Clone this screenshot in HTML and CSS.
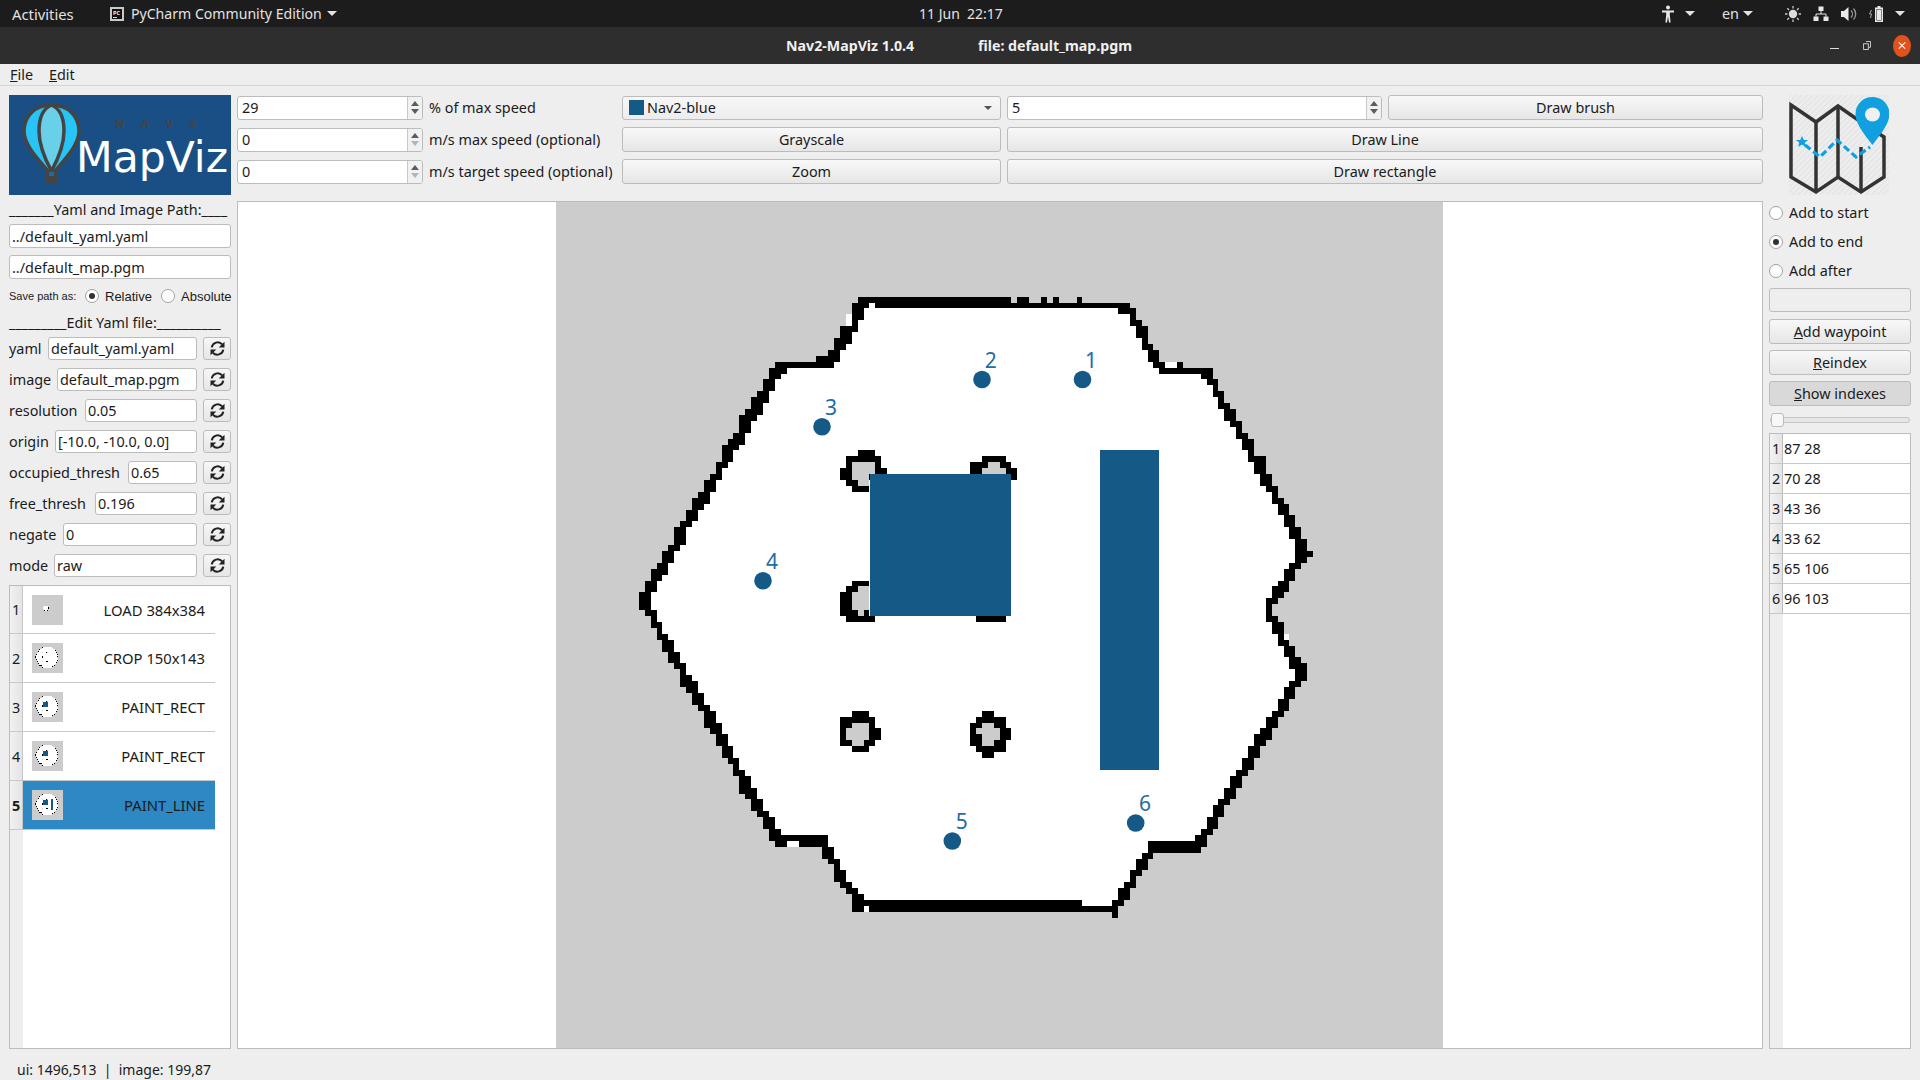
FILE: index.html
```html
<!DOCTYPE html>
<html lang="en">
<head>
<meta charset="utf-8">
<title>Nav2-MapViz</title>
<link rel="stylesheet" href="styles.css">
</head>
<body>
<svg class="defs" width="0" height="0">
  <symbol id="refresh" viewBox="0 0 16 16">
    <path class="ri" d="M2.6 7A5.6 5.6 0 0 1 12.4 4.2"/>
    <path class="ri" d="M13.4 9A5.6 5.6 0 0 1 3.6 11.8"/>
    <path class="rf" d="M14.6 1.6V7H9.2z"/>
    <path class="rf" d="M1.4 14.4V9H6.8z"/>
  </symbol>
</svg>
<div class="app">
  <header class="topbar">
    <div class="tb-left">
      <span class="tb-activities">Activities</span>
      <span class="tb-app">
        <svg class="pc" viewBox="0 0 14 14"><rect width="14" height="14" fill="#c9c9c9"/><rect x="2" y="2" width="10" height="10" fill="#111"/><text x="3" y="7.5" class="pc-t">PC</text><rect x="3" y="10" width="4" height="1" fill="#ddd"/></svg>
        PyCharm Community Edition<i class="caret"></i>
      </span>
    </div>
    <div class="tb-clock">11 Jun&nbsp;&nbsp;22:17</div>
    <div class="tb-right">
      <svg class="ti ti-a" viewBox="0 0 14 18"><circle cx="7" cy="2.4" r="2" fill="#e8e8e8"/><path d="M1 5.6h12v1.8H8.8V10l.8 7.5H8L7 11.5 6 17.5H4.4L5.2 10V7.4H1z" fill="#e8e8e8"/></svg>
      <i class="caret c-a"></i>
      <span class="tb-en">en</span><i class="caret c-en"></i>
      <svg class="ti ti-sun" viewBox="0 0 18 18"><circle cx="9" cy="9" r="4.2" fill="#ddd"/><path d="M9 1v2.4M9 14.6V17M1 9h2.4M14.6 9H17M3.3 3.3l1.7 1.7M13 13l1.7 1.7M14.7 3.3L13 5M5 13l-1.7 1.7" stroke="#ccc" stroke-width="1.3"/></svg>
      <svg class="ti ti-net" viewBox="0 0 16 16"><path d="M5.5 0.5h5v4.5h-5zM0.5 10.5h5V15h-5zM10.5 10.5h5V15h-5z" fill="#e8e8e8"/><path d="M8 5v3M3 10.5V8h10v2.5" stroke="#e8e8e8" fill="none"/></svg>
      <svg class="ti ti-vol" viewBox="0 0 18 16"><path d="M1 5h3l4.5-4v14L4 11H1z" fill="#e8e8e8"/><path d="M11 4.5a5 5 0 0 1 0 7M13.5 2.5a8 8 0 0 1 0 11" stroke="#999" stroke-width="1.3" fill="none"/></svg>
      <svg class="ti ti-bat" viewBox="0 0 16 18"><path d="M2.5 5L0.5 9h2L1.5 13" stroke="#aaa" fill="none"/><path d="M8.5 1h3v1.5h2.5V17H6V2.5h2.500z" fill="#e8e8e8"/><rect x="7.500" y="4" width="5" height="11.500" fill="#1c1c1c"/><rect x="8" y="4.500" width="4" height="10.500" fill="#e8e8e8"/></svg>
      <i class="caret c-end"></i>
    </div>
  </header>

  <div class="titlebar">
    <div class="tt-center">
      <span class="tt-name">Nav2-MapViz 1.0.4</span>
      <span class="tt-file">file: default_map.pgm</span>
    </div>
    <div class="tt-ctl">
      <i class="w-min"></i>
      <svg class="w-max" viewBox="0 0 9 10"><path d="M3.500 0.500h5v6.500h-2M0.500 3h5.500v6.500H0.500z" fill="none" stroke="#ddd"/></svg>
      <span class="w-close"><svg viewBox="0 0 10 10"><path d="M1 1l8 8M9 1l-8 8" stroke="#fff" stroke-width="1.300"/></svg></span>
    </div>
  </div>

  <nav class="menubar"><span class="m-file"><u>F</u>ile</span><span class="m-edit"><u>E</u>dit</span></nav>

  <main class="main">
    <aside class="left">
      <div class="logo">
        <svg class="balloon" viewBox="0 0 222 100">
          <path d="M42.500 10C26 10 15 21 15 36c0 14 14 28 24 40h7c10-12 24-26 24-40C70 21 59 10 42.500 10z" fill="#29c4f6" stroke="#444" stroke-width="3.500"/>
          <path d="M42.500 10C33 14 30 25 30 36c0 14 7 30 12.500 40C48 66 55 50 55 36 55 25 52 14 42.500 10z" fill="#68d0e8" stroke="#444" stroke-width="3.500"/>
          <rect x="37" y="75" width="11" height="13" fill="#444"/>
          <rect x="40" y="77" width="5" height="4" fill="#1f6aa0"/>
        </svg>
        <span class="logo-nav">N A V 2</span>
        <span class="logo-name">MapViz</span>
      </div>
      <div class="head head-a">_______Yaml and Image Path:____</div>
      <input class="field full" value="../default_yaml.yaml">
      <input class="field full second" value="../default_map.pgm">
      <div class="savepath">
        <span class="sp-label">Save path as:</span>
        <span class="radio on"></span><span class="sp-opt sp-rel">Relative</span>
        <span class="radio"></span><span class="sp-opt">Absolute</span>
      </div>
      <div class="head head-b">_________Edit Yaml file:__________</div>
      <div class="yrow"><label class="yl yl-yaml">yaml</label><input class="field" value="default_yaml.yaml"><button class="rbtn"><svg class="ri-svg"><use href="#refresh"/></svg></button></div>
      <div class="yrow"><label class="yl yl-image">image</label><input class="field" value="default_map.pgm"><button class="rbtn"><svg class="ri-svg"><use href="#refresh"/></svg></button></div>
      <div class="yrow"><label class="yl yl-res">resolution</label><input class="field" value="0.05"><button class="rbtn"><svg class="ri-svg"><use href="#refresh"/></svg></button></div>
      <div class="yrow"><label class="yl yl-origin">origin</label><input class="field" value="[-10.0, -10.0, 0.0]"><button class="rbtn"><svg class="ri-svg"><use href="#refresh"/></svg></button></div>
      <div class="yrow"><label class="yl yl-occ">occupied_thresh</label><input class="field" value="0.65"><button class="rbtn"><svg class="ri-svg"><use href="#refresh"/></svg></button></div>
      <div class="yrow"><label class="yl yl-free">free_thresh</label><input class="field" value="0.196"><button class="rbtn"><svg class="ri-svg"><use href="#refresh"/></svg></button></div>
      <div class="yrow"><label class="yl yl-neg">negate</label><input class="field" value="0"><button class="rbtn"><svg class="ri-svg"><use href="#refresh"/></svg></button></div>
      <div class="yrow"><label class="yl yl-mode">mode</label><input class="field" value="raw"><button class="rbtn"><svg class="ri-svg"><use href="#refresh"/></svg></button></div>
      <div class="table history">
        <div class="hrow"><span class="rh">1</span><span class="hcell"><svg class="thumb" viewBox="-1090 -1110 3400 3400"><use href="#map-base"/></svg><span class="htext">LOAD 384x384</span></span></div>
        <div class="hrow"><span class="rh">2</span><span class="hcell"><svg class="thumb" viewBox="0 0 887 846"><use href="#map-base"/></svg><span class="htext">CROP 150x143</span></span></div>
        <div class="hrow"><span class="rh">3</span><span class="hcell"><svg class="thumb" viewBox="0 0 887 846"><use href="#map-base"/><use href="#paint-rect"/></svg><span class="htext">PAINT_RECT</span></span></div>
        <div class="hrow"><span class="rh">4</span><span class="hcell"><svg class="thumb" viewBox="0 0 887 846"><use href="#map-base"/><use href="#paint-rect"/></svg><span class="htext">PAINT_RECT</span></span></div>
        <div class="hrow sel"><span class="rh">5</span><span class="hcell"><svg class="thumb" viewBox="0 0 887 846"><use href="#map-base"/><use href="#paint-rect"/><use href="#paint-line"/></svg><span class="htext">PAINT_LINE</span></span></div>
      </div>
    </aside>

    <section class="center">
      <div class="controls">
        <div class="spin"><span class="sv">29</span><span class="sb"><i class="up"></i><i class="dn"></i></span></div>
        <div class="clabel">% of max speed</div>
        <div class="combo"><i class="swatch"></i><span>Nav2-blue</span><i class="cb-arrow"></i></div>
        <div class="spin"><span class="sv">5</span><span class="sb"><i class="up"></i><i class="dn"></i></span></div>
        <button class="btn">Draw brush</button>

        <div class="spin"><span class="sv">0</span><span class="sb"><i class="up"></i><i class="dn off"></i></span></div>
        <div class="clabel">m/s max speed (optional)</div>
        <button class="btn">Grayscale</button>
        <button class="btn wide">Draw Line</button>

        <div class="spin"><span class="sv">0</span><span class="sb"><i class="up"></i><i class="dn off"></i></span></div>
        <div class="clabel">m/s target speed (optional)</div>
        <button class="btn">Zoom</button>
        <button class="btn wide">Draw rectangle</button>
      </div>
      <div class="canvas">
        <svg class="map" viewBox="0 0 887 846">
          <g id="map-base" transform="scale(5.915)">
            <path class="wall" d="M51 16H77v1H51zM78 16h2v1h-2zM82 16h1v1h-1zM84 16h1v1h-1zM88 16h1v1h-1zM94 120h1v1h-1z"/>
            <path class="wall" d="M50 17H97V18H98V20H99V21H100V24H101V25H102V27H106V28H111V30H112V32H113V34H114V35H115V37H116V39H117V40H118V43H120V46H121V48H122V50H123V51H124V53H125V55H126V57H127V59H128V60H127V61H126V62H125V64H124V66H123V67H122V68H121V70H122V71H123V73H124V75H125V77H126V78H127V81H126V82H125V84H124V86H123V87H122V89H121V91H120V92H119V94H118V96H117V97H116V99H115V101H114V102H113V104H112V106H111V107H110V109H109V110H101V111H100V113H99V114H98V116H97V118H96V119H95V120H50V118V117H49V116H48V115H47V112H46V111H45V109H37V108H36V106H35V104H34V103H33V101H32V100H31V97H30V95H29V94H28V92H27V90H26V89H25V86H24V85H23V83H22V82H21V79H20V78H19V76H18V74H17V72H16V70H15V69H14V66H15V64H16V62H17V61H18V59H19V58H20V55H21V54H22V52H23V50H24V49H25V47H26V46H27V44H28V41H29V40H30V39H31V36H32V35H33V33H34V32H35V30H36V28H37V27H44V26H46V25H47V23H48V21H49V19H50Z"/>
            <path class="free" d="M52 18H95V19H97V21H98V23H99V25H100V27H101V28H102V29H109V30H110V31H111V33H112V35H113V37H114V38H115V40H116V42H117V44H118V46H119V48H120V49H121V51H122V53H123V55H124V57H125V61H124V62H123V64H122V65H121V67H120V71H121V73H122V75H123V77H124V79H125V81H124V82H123V84H122V86H121V87H120V89H119V90H118V92H117V94H116V96H115V97H114V99H113V101H112V102H111V104H110V106H109V107H108V108H100V110H99V111H98V113H97V115H96V116H95V118H52V117H51V116H50V115H49V113H48V111H47V109H46V107H38V106H37V104H36V103H35V101H34V99H33V97H32V96H31V94H30V92H29V90H28V88H27V86H26V85H25V83H24V81H23V80H22V78H21V76H20V74H19V73H18V71H17V69H16V66H17V64H18V63H19V61H20V59H21V58H22V55H23V54H24V52H25V51H26V49H27V47H28V45H29V44H30V42H31V41H32V39H33V37H34V36H35V34H36V32H37V30H38V29H39V28H47V27H48V25H49V24H50V22H51V20H52Z"/>
            <path class="free" d="M53 17h1v1h-1zM49 19h1v2h-1zM103 27h2v1h-2zM123 73h1v1h-1zM39 108h2v1h-2zM52 119h1v1h-1zM89 118h5v1h-5z"/>
            <path class="wall" d="M51 42H54V43H55V45H56V47H53V49H50V48H49V47H48V45H49V43H51Z"/>
            <path class="gray" d="M50 44H54V46H53V48H51V47H50Z"/>
            <path class="wall" d="M72 43H76V44H77V45H78V47H70V44H72Z"/>
            <path class="gray" d="M73 44H75V45H76V46H72V45H73Z"/>
            <path class="wall" d="M50 64H53V70H54V71H49V70H48V66H49V65H50Z"/>
            <path class="gray" d="M51 65H53V69H52V70H51V69H50V66H51Z"/>
            <path class="wall" d="M71 70h5v1h-5z"/>
            <path class="wall" d="M50 86H53V87H54V89H55V91H54V92H53V93H50V92H48V87H50Z"/>
            <path class="gray" d="M50 88H53V91H52V92H50V91H49V89H50Z"/>
            <path class="wall" d="M72 86H74V87H76V89H77V91H76V93H74V94H72V93H71V92H70V88H71V87H72Z"/>
            <path class="gray" d="M72 88H74V89H75V91H74V92H72V90H71V89H72Z"/>
          </g>
          <rect id="paint-rect" class="paint" x="53.100" y="46" width="23.900" height="24" transform="scale(5.915)"/>
          <rect id="paint-line" class="paint" x="92" y="42" width="10" height="54" transform="scale(5.915)"/>
          <g class="wps">
            <circle cx="526.500" cy="177.500" r="8.800"/>
            <circle cx="426" cy="177.500" r="8.800"/>
            <circle cx="266" cy="224.700" r="8.800"/>
            <circle cx="207" cy="378.700" r="8.800"/>
            <circle cx="396.300" cy="639" r="8.800"/>
            <circle cx="579.700" cy="621" r="8.800"/>
          </g>
          <g class="wp-text">
            <text x="535" y="166">1</text>
            <text x="434.700" y="166">2</text>
            <text x="275" y="213">3</text>
            <text x="216" y="366.700">4</text>
            <text x="405.700" y="627">5</text>
            <text x="589" y="609.300">6</text>
          </g>
        </svg>
      </div>
    </section>

    <aside class="right">
      <svg class="maplogo" viewBox="0 0 100 100">
        <defs>
          <pattern id="hatch" width="4" height="4" patternUnits="userSpaceOnUse" patternTransform="rotate(45)"><rect width="2" height="4" fill="#e6e6e6"/></pattern>
        </defs>
        <rect width="100" height="100" fill="url(#hatch)"/>
        <path d="M2 10L27 27 49 11 72 27 95 42V82L72 97 49 82 27 97 2 82Z" fill="none" stroke="#333" stroke-width="3.500" stroke-linejoin="miter"/>
        <path d="M27 27V97M49 11V82M72 52V97" stroke="#333" stroke-width="3.500"/>
        <path d="M16 50L31 62 48 45 67 62 81 52" fill="none" stroke="#109fdf" stroke-width="3.200" stroke-dasharray="7 3.500"/>
        <path d="M13 41l1.800 4h4.200l-3.300 2.800 1.200 4.200-3.900-2.400-3.900 2.400 1.200-4.200L7 45h4.200z" fill="#109fdf"/>
        <path d="M83.500 2C74 2 66.500 9.500 66.500 19c0 11 12 24 17 31 5-7 17-20 17-31C100.500 9.500 93 2 83.500 2z" fill="#109fdf"/>
        <ellipse cx="83.500" cy="19.500" rx="7.500" ry="7" fill="#f0f0f0"/>
      </svg>
      <div class="ropt first"><span class="radio"></span><span>Add to start</span></div>
      <div class="ropt"><span class="radio on"></span><span>Add to end</span></div>
      <div class="ropt"><span class="radio"></span><span>Add after</span></div>
      <input class="field full idx">
      <button class="btn rb"><u>A</u>dd waypoint</button>
      <button class="btn rb"><u>R</u>eindex</button>
      <button class="btn rb pressed"><u>S</u>how indexes</button>
      <div class="slider"><i class="handle"></i></div>
      <div class="table points">
        <div class="prow"><span class="rh">1</span><span class="pcell">87 28</span></div>
        <div class="prow"><span class="rh">2</span><span class="pcell">70 28</span></div>
        <div class="prow"><span class="rh">3</span><span class="pcell">43 36</span></div>
        <div class="prow"><span class="rh">4</span><span class="pcell">33 62</span></div>
        <div class="prow"><span class="rh">5</span><span class="pcell">65 106</span></div>
        <div class="prow"><span class="rh">6</span><span class="pcell">96 103</span></div>
      </div>
    </aside>
  </main>
  <footer class="status">ui: 1496,513&nbsp;&nbsp;|&nbsp;&nbsp;image: 199,87</footer>
</div>
</body>
</html>
```
FILE: styles.css
```css
* { box-sizing: border-box; }
html, body { margin: 0; padding: 0; }
body { font-family: "Noto Sans", "Open Sans", sans-serif; font-size: 14.4px; color: #1b1b1b; background: #eeeeee; overflow: hidden; }
.defs { display: block; height: 0; }
.ri { fill: none; stroke: #222; stroke-width: 1.9; }
.rf { fill: #222; }
.app { width: 1920px; height: 1080px; display: flex; flex-direction: column; }

.topbar { height: 27px; background: #1c1c1c; color: #e2e2e2; display: flex; align-items: center; position: relative; flex: none; font-size: 14.4px; }
.tb-left { display: flex; align-items: center; padding-left: 12px; }
.tb-activities { width: 98px; font-size: 14.8px; }
.tb-app { display: flex; align-items: center; font-size: 14.1px; }
.pc { width: 14px; height: 14px; margin-right: 7px; }
.pc-t { font-size: 5.5px; font-weight: 700; fill: #eee; }
.caret { display: inline-block; width: 0; height: 0; border-left: 5px solid transparent; border-right: 5px solid transparent; border-top: 5px solid #e2e2e2; margin-left: 5px; }
.tb-clock { position: absolute; left: 919px; top: 0; line-height: 27px; white-space: nowrap; font-size: 14px; }
.tb-right { margin-left: auto; display: flex; align-items: center; padding-right: 15px; }
.ti { display: block; flex: none; }
.ti-a { width: 14px; height: 18px; margin-right: 0; }
.c-a { margin-left: 10px; }
.tb-en { margin-left: 27px; }
.c-en { margin-left: 4px; }
.ti-sun { width: 18px; height: 18px; margin-left: 31px; }
.ti-net { width: 16px; height: 16px; margin-left: 11px; }
.ti-vol { width: 18px; height: 16px; margin-left: 11px; }
.ti-bat { width: 16px; height: 18px; margin-left: 11px; }
.c-end { margin-left: 10px; }

.titlebar { height: 37px; background: #2e2e2e; color: #f0f0f0; display: flex; align-items: center; flex: none; position: relative; font-weight: 700; font-size: 14.2px; }
.tt-center { display: flex; padding-left: 786px; }
.tt-name { width: 192px; }
.tt-ctl { margin-left: auto; display: flex; align-items: center; padding-right: 9px; }
.w-min { display: block; width: 9px; height: 1.5px; background: #ddd; margin-top: 6px; margin-right: 24px; }
.w-max { display: block; width: 8px; height: 9px; margin-right: 22px; }
.w-close { width: 18px; height: 22px; border-radius: 50%; background: #e2521d; display: flex; align-items: center; justify-content: center; }
.w-close svg { width: 8px; height: 9px; display: block; }

.menubar { height: 22px; flex: none; background: #eeeeee; border-bottom: 1px solid #d6d6d6; display: flex; align-items: center; padding-left: 10px; }
.m-file { width: 39px; }

.main { flex: 1; min-height: 0; display: flex; padding: 9px 9px 0; gap: 6px; }
.left { width: 222px; flex: none; display: flex; flex-direction: column; }
.center { flex: 1; min-width: 0; display: flex; flex-direction: column; }
.right { width: 142px; flex: none; display: flex; flex-direction: column; }

.logo { height: 100px; flex: none; background: #1a4f85; position: relative; overflow: hidden; }
.balloon { width: 222px; height: 100px; display: block; }
.logo-nav { position: absolute; left: 106px; top: 20px; color: #444; font-weight: 700; font-size: 12px; letter-spacing: 5px; white-space: nowrap; font-family: "Noto Sans", sans-serif; word-spacing: 3px; }
.logo-name { position: absolute; left: 67px; top: 34px; color: #fff; font-family: "DejaVu Sans", sans-serif; font-size: 42.5px; line-height: 58px; white-space: nowrap; }

.head { white-space: nowrap; text-align: left; line-height: 20px; flex: none; }
.head-a { margin-top: 5px; margin-bottom: 4px; }
.head-b { margin-top: 6px; margin-bottom: 4px; }
.field { height: 24px; border: 1px solid #bcbcbc; border-radius: 3px; background: #fff; padding: 0 2px; font: inherit; color: #1b1b1b; min-width: 0; flex: 1; outline: none; }
.full { width: 100%; flex: none; }
.second { margin-top: 7px; }
.savepath { display: flex; align-items: center; height: 22px; margin-top: 6px; font-family: "Liberation Sans", sans-serif; flex: none; }
.sp-label { font-size: 11px; width: 67px; flex: none; white-space: nowrap; }
.sp-opt { font-size: 13px; flex: none; }
.sp-rel { width: 47px; }
.savepath .radio { margin-left: 9px; margin-right: 6px; }
.radio { display: inline-flex; width: 14px; height: 14px; border: 1px solid #a2a2a2; border-radius: 50%; background: #fff; align-items: center; justify-content: center; flex: none; }
.radio.on::after { content: ""; width: 6px; height: 6px; border-radius: 50%; background: #333; }

.yrow { height: 23px; display: flex; align-items: stretch; flex: none; margin-bottom: 8px; }
.yrow .field { height: auto; }
.yl { display: flex; align-items: center; white-space: nowrap; flex: none; }
.yl-yaml { width: 39px; }
.yl-image { width: 48px; }
.yl-res { width: 76px; }
.yl-origin { width: 46px; }
.yl-occ { width: 119px; }
.yl-free { width: 86px; }
.yl-neg { width: 54px; }
.yl-mode { width: 45px; }
.rbtn { width: 28px; margin-left: 6px; padding: 0; flex: none; border: 1px solid #bcbcbc; border-radius: 3px; background: linear-gradient(#f7f7f7, #e6e6e6); display: flex; align-items: center; justify-content: center; }
.ri-svg { width: 17px; height: 17px; display: block; }

.table { flex: 1; min-height: 0; border: 1px solid #bcbcbc; background: linear-gradient(to right, #eeeeee 13px, #ffffff 13px); }
.rh { width: 13px; flex: none; display: flex; align-items: center; justify-content: center; border-right: 1px solid #bcbcbc; background: linear-gradient(to right, #f2f2f2, #e4e4e4); }
.hrow { width: 205px; height: 49px; display: flex; border-bottom: 1px solid #c8c8c8; }
.hrow:first-child { height: 48px; }
.hrow .rh { border-right-color: #c8c8c8; }
.hcell { flex: 1; display: flex; align-items: center; padding-left: 9px; padding-right: 10px; background: #fff; }
.thumb { width: 31px; height: 30px; background: #cccccc; display: block; flex: none; shape-rendering: crispEdges; }
.htext { margin-left: auto; white-space: nowrap; font-size: 14.8px; }
.sel .hcell { background: #2d88c3; }
.sel .rh { font-weight: 700; }

.controls { display: grid; grid-template-columns: 186px 187px 379px 375px 375px; grid-template-rows: 25px 25px 25px; gap: 7px 6px; flex: none; }
.spin { height: 24px; align-self: center; border: 1px solid #bcbcbc; border-radius: 3px; background: #fff; display: flex; align-items: center; }
.sv { flex: 1; padding-left: 4px; }
.sb { width: 15px; height: 100%; border-left: 1px solid #c8c8c8; background: #f1f1f1; display: flex; flex-direction: column; align-items: center; justify-content: center; gap: 3px; border-radius: 0 2px 2px 0; }
.up { width: 0; height: 0; border-left: 4px solid transparent; border-right: 4px solid transparent; border-bottom: 5px solid #5c5c5c; }
.dn { width: 0; height: 0; border-left: 4px solid transparent; border-right: 4px solid transparent; border-top: 5px solid #5c5c5c; }
.dn.off { border-top-color: #b4b4b4; }
.clabel { display: flex; align-items: center; white-space: nowrap; }
.combo { height: 24px; align-self: center; border: 1px solid #bcbcbc; border-radius: 3px; background: linear-gradient(#f7f7f7, #ececec); display: flex; align-items: center; padding-left: 6px; }
.swatch { width: 15px; height: 15px; background: #155a87; margin-right: 3px; }
.cb-arrow { margin-left: auto; margin-right: 8px; width: 0; height: 0; border-left: 4px solid transparent; border-right: 4px solid transparent; border-top: 4px solid #555; }
.btn { border: 1px solid #bcbcbc; border-radius: 3px; background: linear-gradient(#f8f8f8, #e6e6e6); font: inherit; color: #1b1b1b; padding: 0; }
.wide { grid-column: 4 / 6; }
.canvas { flex: 1; min-height: 0; margin-top: 17px; border: 1px solid #bcbcbc; background: #fff; display: flex; justify-content: center; padding-right: 1px; }
.map { width: 887px; height: 846px; display: block; background: #cccccc; shape-rendering: crispEdges; }
.wall { fill: #000; }
.free { fill: #fff; }
.gray { fill: #cccccc; }
.paint { fill: #155a87; }
.wps circle { fill: #155a87; shape-rendering: auto; }
.wp-text text { fill: #1b6ea6; font-size: 21px; text-anchor: middle; }

.maplogo { width: 100px; height: 100px; display: block; margin-left: 20px; flex: none; }
.ropt { height: 29px; display: flex; align-items: center; gap: 6px; flex: none; }
.ropt.first { margin-top: 3px; }
.idx { margin-top: 3px; margin-bottom: 1px; height: 24px; background: #eeeeee; }
.rb { height: 25px; margin-top: 6px; flex: none; }
.pressed { background: #d9d9d9; }
.slider { height: 6px; margin: 11px 1px 10px; border: 1px solid #c4c4c4; border-radius: 3px; background: #e6e6e6; position: relative; flex: none; }
.handle { position: absolute; left: 0; top: -5px; width: 13px; height: 14px; border: 1px solid #bcbcbc; border-radius: 3px; background: #f7f7f7; }
.prow { height: 30px; display: flex; border-bottom: 1px solid #c8c8c8; }
.pcell { flex: 1; display: flex; align-items: center; padding-left: 1px; background: #fff; }
.status { height: 31px; flex: none; padding: 10px 0 0 17px; display: flex; align-items: center; font-size: 14px; }
```
